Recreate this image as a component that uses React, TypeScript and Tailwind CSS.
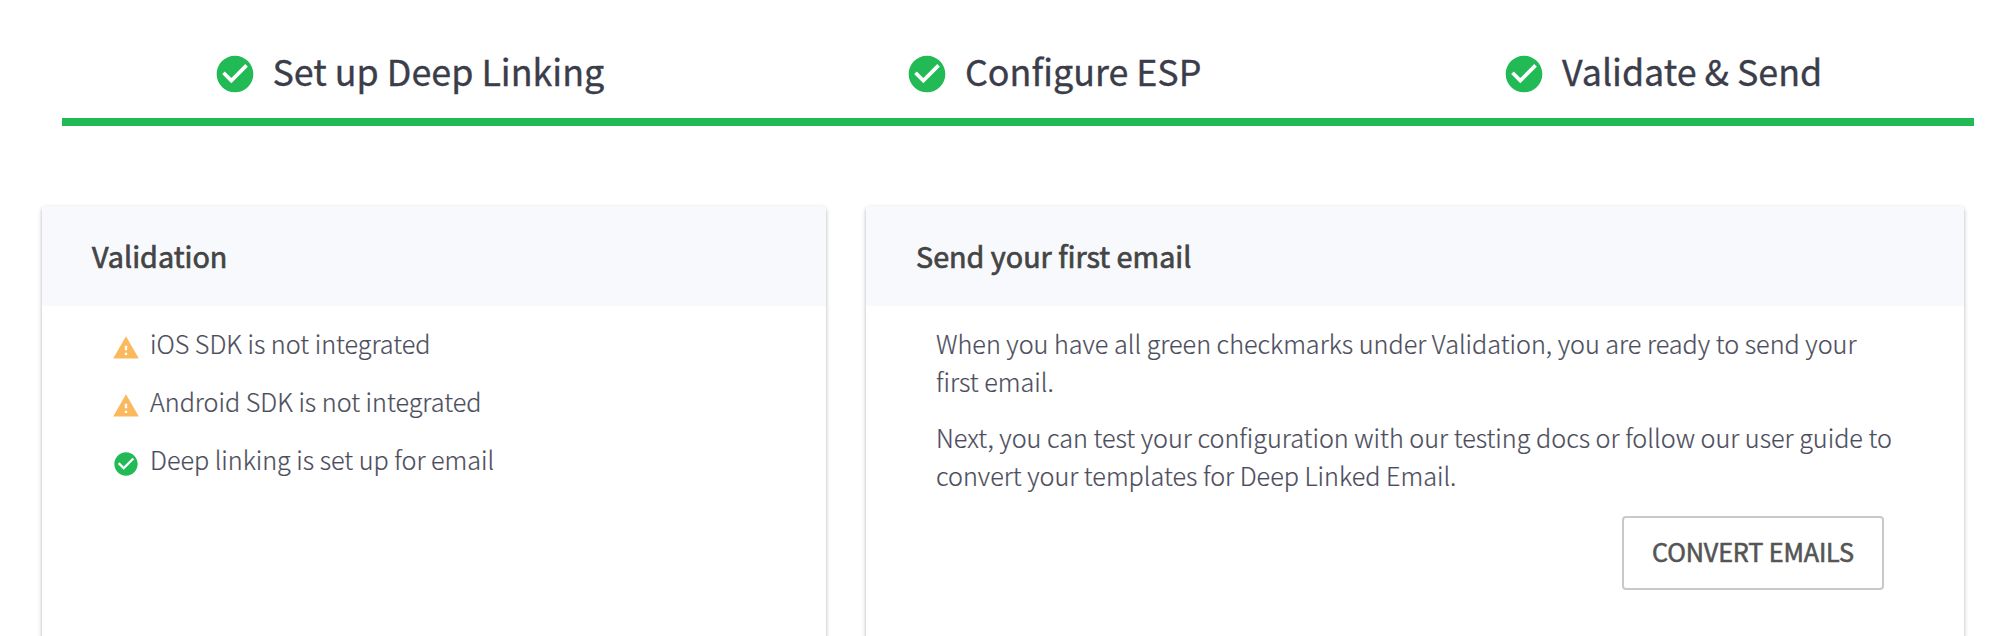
import React from "react";

const CHECK =
  "M12 2C6.48 2 2 6.48 2 12s4.48 10 10 10 10-4.48 10-10S17.52 2 12 2zm-2 15l-5-5 1.41-1.41L10 14.17l7.59-7.59L19 8l-9 9z";
const WARNING = "M1 21h22L12 2 1 21zm12-3h-2v-2h2v2zm0-4h-2v-4h2v4z";

function Icon({ path, className }: { path: string; className: string }) {
  return (
    <svg viewBox="0 0 24 24" className={className} fill="currentColor">
      <path d={path} />
    </svg>
  );
}

function Step({ label, className }: { label: string; className: string }) {
  return (
    <div className={`flex items-start ${className}`}>
      <Icon path={CHECK} className="mt-[8px] size-11 shrink-0 text-[#21ba55]" />
      <span className="ml-4 whitespace-nowrap text-[35.85px] leading-[52px] text-[#3b3d4a] [-webkit-text-stroke:0.35px]">
        {label}
      </span>
    </div>
  );
}

function Card({ title, className, children }: { title: string; className: string; children: React.ReactNode }) {
  return (
    <section className={`h-[480px] shrink-0 rounded-[4px] bg-white shadow-[0_2px_4px_rgba(0,0,0,0.3)] ${className}`}>
      <h2 className="h-[100px] rounded-t-[4px] bg-[#f8f9fd] pl-[50px] pt-[30px] text-[28.75px] leading-[40px] text-[#444] [-webkit-text-stroke:0.7px]">
        {title}
      </h2>
      {children}
    </section>
  );
}

const CHECKS = [
  { label: "iOS SDK is not integrated", ok: false },
  { label: "Android SDK is not integrated", ok: false },
  { label: "Deep linking is set up for email", ok: true },
];

export default function App() {
  return (
    <div className="h-[636px] w-[2008px] overflow-hidden bg-white font-['Noto_Sans_CJK_SC','Noto_Sans',sans-serif]">
      <div className="ml-[62px] flex h-[126px] w-[1912px] border-b-8 border-[#21ba55] pt-[44px]">
        <Step label="Set up Deep Linking" className="h-[52px] w-[693px] pl-[150.5px]" />
        <Step label="Configure ESP" className="h-[52px] w-[597px] pl-[150px]" />
        <Step label="Validate & Send" className="h-[52px] pl-[150px]" />
      </div>
      <div className="mt-[80px] flex gap-10 pl-[42px]">
        <Card title="Validation" className="w-[784px]">
          <ul className="pl-[70px] pt-[10px] text-[#4b4d5c]">
            {CHECKS.map((c) => (
              <li key={c.label} className="flex h-[58px] items-start">
                <Icon
                  path={c.ok ? CHECK : WARNING}
                  className={`mt-[18px] size-7 shrink-0 ${c.ok ? "text-[#21ba55]" : "text-[#fbb95e]"}`}
                />
                <span className="ml-[10px] mt-[8px] whitespace-nowrap text-[25.13px] font-light leading-[38px] [-webkit-text-stroke:0.2px]">
                  {c.label}
                </span>
              </li>
            ))}
          </ul>
        </Card>
        <Card title="Send your first email" className="w-[1098px]">
          <div className="pl-[70px] pt-[18px] text-[25.17px] font-light leading-[38px] text-[#4b4d5c] [-webkit-text-stroke:0.2px]">
            <p className="whitespace-nowrap">
              When you have all green checkmarks under Validation, you are ready to send your
              <br />
              first email.
            </p>
            <p className="mt-[18px] whitespace-nowrap">
              Next, you can test your configuration with our testing docs or follow our user guide to
              <br />
              convert your templates for Deep Linked Email.
            </p>
          </div>
          <div className="mt-[22px] flex justify-end pr-[80px]">
            <button className="h-[74px] w-[262px] whitespace-nowrap rounded-[4px] border-2 border-[#c9c9c9] pb-[2px] text-[25.2px] tracking-[-0.15px] text-[#555] [-webkit-text-stroke:0.6px]">
              CONVERT EMAILS
            </button>
          </div>
        </Card>
      </div>
    </div>
  );
}
